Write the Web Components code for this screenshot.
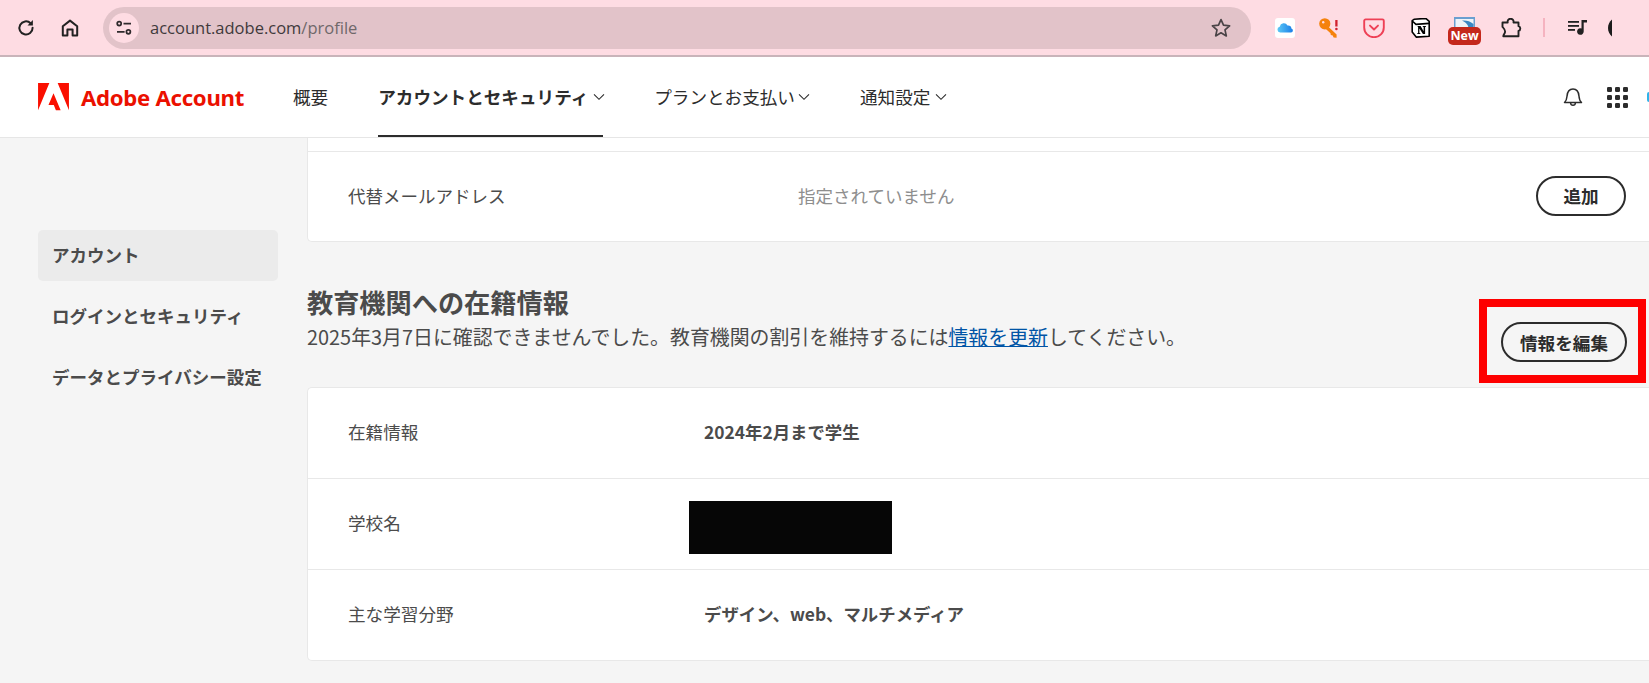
<!DOCTYPE html>
<html lang="ja">
<head>
<meta charset="utf-8">
<title>Adobe Account</title>
<style>
  html, body { margin: 0; height: 100%; overflow: hidden; background: #f5f5f5; }
  body { font-family: "Noto Sans CJK JP", "Noto Sans", sans-serif; color: #4b4b4b; }
</style>
</head>
<body>

<browser-bar></browser-bar>
<account-header></account-header>

<account-page>
  <side-nav slot="side"></side-nav>

  <info-card flush>
    <info-row label="代替メールアドレス" muted value="指定されていません">
      <pill-button slot="action">追加</pill-button>
    </info-row>
  </info-card>

  <section-head title="教育機関への在籍情報">
    2025年3月7日に確認できませんでした。教育機関の割引を維持するには<a href="#">情報を更新</a>してください。
    <pill-button slot="action" marked>情報を編集</pill-button>
  </section-head>

  <info-card>
    <info-row label="在籍情報" strong value="2024年2月まで学生"></info-row>
    <info-row label="学校名"><redact-box slot="content"></redact-box></info-row>
    <info-row label="主な学習分野" strong value="デザイン、web、マルチメディア"></info-row>
  </info-card>
</account-page>

<script>
class BrowserBar extends HTMLElement {
  constructor() {
    super();
    this.attachShadow({mode: "open"});
  }
  connectedCallback() {
    this.shadowRoot.innerHTML = `
      <style>
        :host { display: flex; align-items: center; height: 55px; background: #fedce3; border-bottom: 2px solid #c9b4ba; padding-left: 15px; overflow: hidden; }
        svg { display: block; flex: none; }
        .nav { width: 22px; height: 22px; margin-right: 22px; }
        .omni { flex: none; width: 1148px; height: 42px; box-sizing: border-box; background: #e2c3c9; border-radius: 21px; display: flex; align-items: center; padding: 0 19px 0 6px; }
        .tune { width: 30px; height: 30px; border-radius: 50%; background: #fedce3; display: flex; align-items: center; justify-content: center; flex: none; }
        .url { margin-left: 11px; font: 16.5px "Open Sans", "Noto Sans", sans-serif; color: #3f3a3c; flex: 1; }
        .url span { color: #6f686a; }
        .exts { display: flex; align-items: center; height: 100%; margin-left: 24px; }
        .exts > * { flex: none; }
        .new-wrap { position: relative; width: 34px; height: 28px; align-self: flex-start; margin-top: 17px; }
        .new-wrap .shot { position: absolute; left: 6px; top: 0; }
        .new { position: absolute; left: 0; top: 10px; width: 33px; height: 18px; border-radius: 5px; background: #c4281c; color: #fff; font: bold 12.5px/18px "Open Sans", sans-serif; text-align: center; }
        .sep { width: 2px; height: 19px; background: #f5b3c0; }
      </style>
      <svg class="nav" viewBox="0 0 22 22" fill="none" stroke="#222" stroke-width="2"><path d="M17.6 10.800a6.600 6.600 0 1 1-2-4.600" stroke-linecap="round"/><path d="M17.900 3v5.400h-5.400z" fill="#222" stroke="none"/></svg>
      <svg class="nav" viewBox="0 0 22 22" fill="none" stroke="#222" stroke-width="2" stroke-linejoin="round"><path d="M3.800 18.500V9.200L11 3.600l7.200 5.600v9.300h-4.600v-6H8.400v6z"/></svg>
      <div class="omni">
        <div class="tune">
          <svg width="18" height="16" viewBox="0 0 18 16" fill="none" stroke="#2f2a2c" stroke-width="1.700"><circle cx="4.200" cy="3.600" r="2"/><path d="M8.500 3.600H16M2 11.800h7.600"/><circle cx="13.400" cy="11.800" r="2"/></svg>
        </div>
        <div class="url">account.adobe.com<span>/profile</span></div>
        <svg width="22" height="22" viewBox="0 0 22 22" fill="none" stroke="#4a4447" stroke-width="1.700" stroke-linejoin="round"><path d="M11 2.600l2.500 5.600 6.100.6-4.600 4.100 1.300 6-5.300-3.100-5.300 3.100 1.300-6-4.600-4.100 6.100-.6z"/></svg>
      </div>
      <div class="exts">
        <svg width="20" height="20" viewBox="0 0 20 20" style="margin-right:24px"><rect width="20" height="20" rx="3" fill="#fff"/><defs><linearGradient id="cl" x1="0" x2="1"><stop offset="0" stop-color="#5cc8f5"/><stop offset="1" stop-color="#1a7ee8"/></linearGradient></defs><path d="M5.200 14.600a3 3 0 0 1-.5-5.900 4.200 4.200 0 0 1 7.800-1.200 3.100 3.100 0 0 1 3.900 3 2.100 2.100 0 0 1-.4 4.100z" fill="url(#cl)"/></svg>
        <svg width="20" height="20" viewBox="0 0 20 20" style="margin-right:24px"><circle cx="5.800" cy="5.800" r="5.600" fill="#f5820c"/><circle cx="4.200" cy="4.200" r="1.200" fill="#fedce3"/><path d="M7.800 7.200l9.800 9.300v3.300l-3-.4-.9-2-1.900-.3-.3-1.900-6-5.500z" fill="#f5820c"/><path d="M17.400 2v6.500" stroke="#d11f2f" stroke-width="2.300"/><circle cx="17.400" cy="11" r="1.300" fill="#d11f2f"/></svg>
        <svg width="22" height="20" viewBox="0 0 22 20" style="margin-right:26px" fill="none"><path d="M2.600 1.400h16.800a1.400 1.400 0 0 1 1.400 1.400v6.600a9.800 9.800 0 0 1-19.600 0V2.800a1.400 1.400 0 0 1 1.400-1.400z" stroke="#ee4056" stroke-width="1.900"/><path d="M7 7.600l4 3.900 4-3.900" stroke="#ee4056" stroke-width="1.900" stroke-linecap="round" stroke-linejoin="round"/></svg>
        <svg width="19" height="20" viewBox="0 0 19 20" style="margin-right:18px"><path d="M3.400 1.200L14.800.4l3.400 3v14.800l-13 .9-4-5V2.600z" fill="#fff" stroke="#000" stroke-width="1.600" stroke-linejoin="round"/><path d="M1.200 3l3.800 3.400 13.200-1" fill="none" stroke="#000" stroke-width="1.600"/><path d="M6.600 8h3l3 5.200V9l-.9-.2V8h3.300v.8l-.9.2v7h-2.200L8.400 10.400V15l1 .2v.8H6.200v-.8l.9-.2V8.900l-.5-.1z" fill="#000"/></svg>
        <div class="new-wrap" style="margin-right:19px">
          <svg class="shot" width="21" height="11" viewBox="0 0 21 11"><rect width="21" height="11" fill="#6a9fd0"/><rect x="1.500" y="2" width="18" height="9" fill="#eef3f8"/><path d="M8 3.500c4-.5 8 .5 11.500 3.500v4h-5c0-3-3-6-6.500-7.500z" fill="#3b87c4"/></svg>
          <div class="new">New</div>
        </div>
        <svg width="21" height="20" viewBox="0 0 21 20" fill="none" stroke="#222" stroke-width="1.900" stroke-linejoin="round" style="margin-right:21px"><path d="M1.500 4.500h5.200a3 3 0 1 1 5.800 0h5v3.700a2.500 2.500 0 0 1 0 4.800v5.200H2.300c.3-1.800 1.800-2.800 1.800-4.700S2.500 10 1.500 8.800z"/></svg>
        <div class="sep" style="margin-right:23px"></div>
        <svg width="19" height="15" viewBox="0 0 19 15" style="margin-right:21px" fill="#222"><rect x="0" y="1" width="11" height="1.800"/><rect x="0" y="5" width="11" height="1.800"/><rect x="0" y="9" width="7" height="1.800"/><path d="M13.500 0H19v2.400h-3.300V11.500a3.300 3.300 0 1 1-2.200-3.100z"/></svg>
        <svg width="4" height="18" viewBox="0 0 4 18"><path d="M4 .5C1.500 2.500 0 5.500 0 9s1.500 6.500 4 8.500z" fill="#1c1c1c"/></svg>
      </div>`;
  }
}

class AccountHeader extends HTMLElement {
  constructor() {
    super();
    this.attachShadow({mode: "open"});
  }
  connectedCallback() {
    const chev = `<svg width="12" height="8" viewBox="0 0 12 8" fill="none" stroke="#2c2c2c" stroke-width="1.100"><path d="M1 1.300l5 5 5-5"/></svg>`;
    this.shadowRoot.innerHTML = `
      <style>
        :host { display: flex; align-items: stretch; height: 80px; background: #fff; border-bottom: 1px solid #e6e6e6; overflow: hidden; }
        svg { flex: none; }
        .brand { display: flex; align-items: center; margin-left: 38px; width: 255px; flex: none; }
        .brand span { margin-left: 12px; font: bold 22.2px "Noto Sans", "Open Sans", sans-serif; color: #eb1000; letter-spacing: -0.3px; }
        nav { display: flex; align-items: stretch; font-size: 17.6px; color: #2c2c2c; white-space: nowrap; }
        .tab { display: flex; flex: none; align-items: center; gap: 3px; box-sizing: border-box; padding-bottom: 1px; margin-right: 50px; }
        .tab.active { width: 225px; gap: 5px; font-weight: 700; border-bottom: 2px solid #2c2c2c; padding-top: 1px; padding-bottom: 0; margin-right: 51px; }
        .tools { margin-left: auto; display: flex; align-items: center; }
        .dot { width: 2px; height: 10px; background: #2fb3ea; border-radius: 2px 0 0 2px; }
      </style>
      <div class="brand">
        <svg width="31" height="28" viewBox="0 0 32 29"><path d="M0 0h11.700L0 28.300zM20.300 0H32v28.300zM16 10.500l7.400 17.800h-4.900l-2.200-5.600h-5.500z" fill="#fa0f00"/></svg>
        <span>Adobe Account</span>
      </div>
      <nav>
        <div class="tab">概要</div>
        <div class="tab active">アカウントとセキュリティ${chev}</div>
        <div class="tab">プランとお支払い${chev}</div>
        <div class="tab" style="gap:5px">通知設定${chev}</div>
      </nav>
      <div class="tools">
        <svg width="20" height="22" viewBox="0 0 20 22" fill="none" stroke="#2c2c2c" stroke-width="1.500" stroke-linejoin="round" style="margin-right:24px"><path d="M1.500 16.500c2-1.700 2.300-3.500 2.500-6.300C4.300 6 6.300 3 10 3s5.700 3 6 7.200c.2 2.800.5 4.600 2.500 6.300z"/><path d="M7.600 17c.2 3 4.600 3 4.800 0"/></svg>
        <svg width="21" height="21" viewBox="0 0 21 21" fill="#2c2c2c" style="margin-right:19px">
          <rect x="0" y="0" width="5" height="5" rx="1.300"/><rect x="8" y="0" width="5" height="5" rx="1.300"/><rect x="16" y="0" width="5" height="5" rx="1.300"/>
          <rect x="0" y="8" width="5" height="5" rx="1.300"/><rect x="8" y="8" width="5" height="5" rx="1.300"/><rect x="16" y="8" width="5" height="5" rx="1.300"/>
          <rect x="0" y="16" width="5" height="5" rx="1.300"/><rect x="8" y="16" width="5" height="5" rx="1.300"/><rect x="16" y="16" width="5" height="5" rx="1.300"/>
        </svg>
        <div class="dot"></div>
      </div>`;
  }
}

class AccountPage extends HTMLElement {
  constructor() {
    super();
    this.attachShadow({mode: "open"});
    this.shadowRoot.innerHTML = `
      <style>
        :host { display: grid; grid-template-columns: 307px 1fr; height: 545px; overflow: hidden; }
        main { display: flex; flex-direction: column; margin-right: -12px; min-width: 0; }
      </style>
      <slot name="side"></slot>
      <main><slot></slot></main>`;
  }
}

class SideNav extends HTMLElement {
  constructor() {
    super();
    this.attachShadow({mode: "open"});
    this.shadowRoot.innerHTML = `
      <style>
        :host { display: flex; flex-direction: column; gap: 10px; padding: 92px 29px 0 38px; font-size: 17.5px; font-weight: 700; color: #4b4b4b; }
        div { height: 51px; box-sizing: border-box; display: flex; align-items: center; padding: 0 0 3px 14px; border-radius: 5px; white-space: nowrap; }
        .on { background: #ebebeb; }
      </style>
      <div class="on">アカウント</div>
      <div>ログインとセキュリティ</div>
      <div>データとプライバシー設定</div>`;
  }
}

class InfoCard extends HTMLElement {
  constructor() {
    super();
    this.attachShadow({mode: "open"});
    this.shadowRoot.innerHTML = `
      <style>
        :host { display: block; background: #fff; border: 1px solid #e8e8e8; border-right: 0; border-radius: 5px 0 0 5px; overflow: hidden; }
        :host([flush]) { border-width: 0 0 1px 1px; border-radius: 0 0 0 5px; padding-top: 13px; }
        ::slotted(info-row:not(:first-child)) { border-top: 1px solid #e8e8e8; }
      </style>
      <slot></slot>`;
  }
}

class InfoRow extends HTMLElement {
  constructor() {
    super();
    this.attachShadow({mode: "open"});
  }
  connectedCallback() {
    const value = this.getAttribute("value") || "";
    this.shadowRoot.innerHTML = `
      <style>
        :host { display: grid; grid-template-columns: 356px 1fr auto; align-items: center; box-sizing: border-box; height: 91px; padding: 0 35px 3px 40px; font-size: 17.6px; color: #4b4b4b; }
        :host(:first-child) { height: 90px; }
        :host([muted]) { border-top: 1px solid #e8e8e8; grid-template-columns: 450px 1fr auto; font-size: 17.5px; padding-bottom: 2px; }
        :host([strong]) .value { font-weight: 700; font-size: 17.4px; }
        :host([muted]) .value { color: #8e8e8e; }
      </style>
      <div class="label">${this.getAttribute("label")}</div>
      <div class="value">${value}<slot name="content"></slot></div>
      <slot name="action"></slot>`;
  }
}

class RedactBox extends HTMLElement {
  constructor() {
    super();
    this.attachShadow({mode: "open"}).innerHTML = `
      <style>:host { display: block; width: 203px; height: 53px; background: #060606; margin: 10px 0 0 -15px; }</style>`;
  }
}

class SectionHead extends HTMLElement {
  constructor() {
    super();
    this.attachShadow({mode: "open"});
  }
  connectedCallback() {
    this.shadowRoot.innerHTML = `
      <style>
        :host { display: grid; grid-template-columns: 1fr auto; align-items: start; height: 145px; box-sizing: border-box; padding: 42px 34px 0 0; }
        h2 { margin: 0; font-size: 26.2px; line-height: 36px; font-weight: 700; color: #4b4b4b; }
        p { margin: 4px 0 0; font-size: 19.9px; line-height: 26px; color: #4b4b4b; white-space: nowrap; }
        ::slotted(a) { color: #0054a6; }
        .act { padding-top: 38px; }
      </style>
      <div>
        <h2>${this.getAttribute("title")}</h2>
        <p><slot></slot></p>
      </div>
      <div class="act"><slot name="action"></slot></div>`;
  }
}

class PillButton extends HTMLElement {
  constructor() {
    super();
    this.attachShadow({mode: "open"});
    this.shadowRoot.innerHTML = `
      <style>
        :host { display: inline-flex; position: relative; align-items: center; justify-content: center; box-sizing: border-box; height: 40px; min-width: 90px; padding: 0 17px; border: 2px solid #2c2c2c; border-radius: 20px; font-size: 17.6px; font-weight: 700; color: #2c2c2c; white-space: nowrap; }
        :host([marked])::after { content: ""; position: absolute; left: -24px; top: -25px; width: 151px; height: 68px; border: 8px solid #fe0000; }
      </style>
      <slot></slot>`;
  }
}

customElements.define("browser-bar", BrowserBar);
customElements.define("account-header", AccountHeader);
customElements.define("account-page", AccountPage);
customElements.define("side-nav", SideNav);
customElements.define("info-card", InfoCard);
customElements.define("info-row", InfoRow);
customElements.define("redact-box", RedactBox);
customElements.define("section-head", SectionHead);
customElements.define("pill-button", PillButton);
</script>
</body>
</html>
